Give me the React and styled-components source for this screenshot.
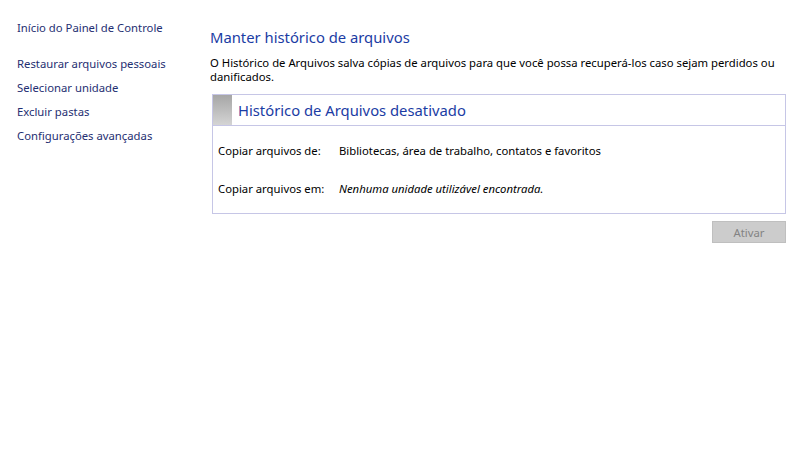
import React from "react";
import styled, { createGlobalStyle } from "styled-components";

const Global = createGlobalStyle`
  html, body { margin: 0; padding: 0; background: #fff; }
  body { font-family: "Noto Sans", "Open Sans", sans-serif; font-size: 11.3px; color: #000; }
`;

const Page = styled.div`
  display: flex;
  width: 800px;
  height: 451px;
  background: #fff;
`;

const Sidebar = styled.nav`
  width: 210px;
  flex: none;
  padding: 19px 0 0 17px;
  box-sizing: border-box;
  display: flex;
  flex-direction: column;
`;

const NavLink = styled.a`
  color: #1f2f72;
  font-size: 11.3px;
  line-height: 18px;
  height: 18px;
  margin-bottom: ${(p) => (p.$gap ? "18px" : "6px")};
  text-decoration: none;
  white-space: nowrap;
  cursor: pointer;
`;

const Main = styled.main`
  flex: 1;
  padding: 26px 14px 0 0;
  display: flex;
  flex-direction: column;
`;

const Title = styled.h1`
  margin: 0;
  font-weight: normal;
  font-size: 14.8px;
  line-height: 22px;
  color: #1b3ca4;
`;

const Description = styled.p`
  margin: 8px 0 0 0;
  font-size: 11.3px;
  line-height: 14px;
  color: #000;
`;

const Panel = styled.section`
  margin: 10px 0 0 2px;
  border: 1px solid #c6c6e6;
  display: flex;
  flex-direction: column;
`;

const PanelHeader = styled.div`
  display: flex;
  align-items: stretch;
  height: 30px;
  border-bottom: 1px solid #c6c6e6;
`;

const StatusBlock = styled.div`
  width: 19px;
  background: linear-gradient(#a6a6a6, #d4d4d4);
`;

const PanelTitle = styled.h2`
  margin: 0 0 0 6px;
  font-weight: normal;
  font-size: 14.8px;
  line-height: 30px;
  color: #1b3ca4;
`;

const PanelBody = styled.div`
  display: grid;
  grid-template-columns: 121px 1fr;
  row-gap: 20px;
  padding: 16px 5px 15px 5px;
`;

const Label = styled.span`
  line-height: 18px;
`;

const Value = styled.span`
  line-height: 18px;
  font-style: ${(p) => (p.$italic ? "italic" : "normal")};
`;

const Actions = styled.div`
  display: flex;
  justify-content: flex-end;
  margin-top: 7px;
`;

const Button = styled.button`
  width: 74px;
  height: 22px;
  background: #cccccc;
  border: 1px solid #bfbfbf;
  color: #838383;
  font-family: inherit;
  font-size: 11.3px;
  padding: 0;
`;

export default function App() {
  return (
    <>
      <Global />
      <Page>
        <Sidebar>
          <NavLink $gap>Início do Painel de Controle</NavLink>
          <NavLink>Restaurar arquivos pessoais</NavLink>
          <NavLink>Selecionar unidade</NavLink>
          <NavLink>Excluir pastas</NavLink>
          <NavLink>Configurações avançadas</NavLink>
        </Sidebar>
        <Main>
          <Title>Manter histórico de arquivos</Title>
          <Description>
            O Histórico de Arquivos salva cópias de arquivos para que você possa recuperá-los caso sejam perdidos ou danificados.
          </Description>
          <Panel>
            <PanelHeader>
              <StatusBlock />
              <PanelTitle>Histórico de Arquivos desativado</PanelTitle>
            </PanelHeader>
            <PanelBody>
              <Label>Copiar arquivos de:</Label>
              <Value>Bibliotecas, área de trabalho, contatos e favoritos</Value>
              <Label>Copiar arquivos em:</Label>
              <Value $italic>Nenhuma unidade utilizável encontrada.</Value>
            </PanelBody>
          </Panel>
          <Actions>
            <Button disabled>Ativar</Button>
          </Actions>
        </Main>
      </Page>
    </>
  );
}
